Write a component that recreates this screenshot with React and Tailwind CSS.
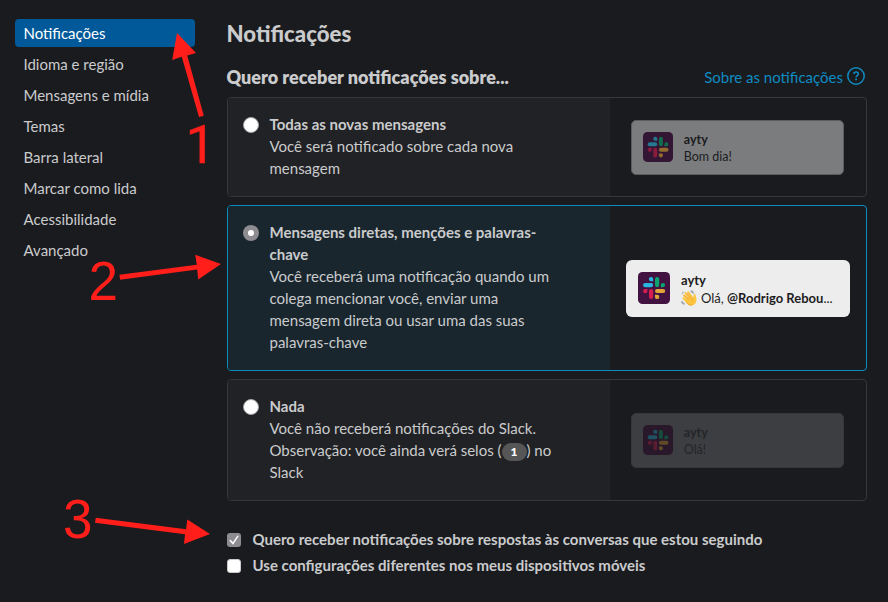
import React from 'react';

const navItems = [
  'Notificações',
  'Idioma e região',
  'Mensagens e mídia',
  'Temas',
  'Barra lateral',
  'Marcar como lida',
  'Acessibilidade',
  'Avançado',
];

function SlackLogo({ className }) {
  return (
    <svg viewBox="0 0 32 32" className={className}>
      <rect width="32" height="32" rx="4.5" fill="#421341" />
      <g fill="#2bb6df">
        <rect x="5" y="11" width="10.2" height="4.2" rx="2.1" />
        <path d="M15.2 9.3h-2.1a2.15 2.15 0 1 1 2.1-2.1z" />
      </g>
      <g fill="#0ba46e">
        <rect x="17" y="5" width="4.2" height="10.2" rx="2.1" />
        <path d="M22.8 15.2v-2.1a2.15 2.15 0 1 1 2.1 2.1z" />
      </g>
      <g fill="#e3a43a">
        <rect x="17" y="16.9" width="10.2" height="4.2" rx="2.1" />
        <path d="M17 22.8h2.1a2.15 2.15 0 1 1-2.1 2.1z" />
      </g>
      <g fill="#d41e50">
        <rect x="11" y="16.9" width="4.2" height="10.2" rx="2.1" />
        <path d="M9.4 16.9V19a2.15 2.15 0 1 1-2.1-2.1z" />
      </g>
    </svg>
  );
}

function Wave() {
  return (
    <svg viewBox="0 0 16 16" className="h-4 w-4 shrink-0">
      <path
        d="M2.4 8.2 6.2 12.4M2.9 5.4l5.2 5.6M4.6 3.1l5 6M7.2 2.3l4.6 6"
        stroke="#fcc23a"
        strokeWidth="1.9"
        strokeLinecap="round"
        fill="none"
      />
      <path
        d="M4.4 9.2 9.2 5l2.9 3c.8-.6.5-2.3.7-3.5.3-1 1.5-.9 1.7.2.3 1.7 1.2 3.7 1 5.9-.3 2.6-2.3 4.9-5.1 5-2 .1-3.6-1.2-4.7-2.7z"
        fill="#fdc540"
      />
      <path
        d="m3.9 5.3 4.1 4.4M5.9 3.3l4 4.7M12.1 8c-1.2.9-1.4 2-.9 3.2M5.6 12.5c1.2 1.9 3.1 3 5.4 2.7"
        stroke="#e8912a"
        strokeWidth=".6"
        fill="none"
        strokeLinecap="round"
      />
      <path
        d="M.6 11.2c.5 1.5 1.5 2.5 3 3M9.7 1c1.300.3 2.300 1.200 2.800 2.500"
        stroke="#a3a9ad"
        strokeWidth="1.900"
        fill="none"
      />
      <path d="M1 4.300c.3-1.300 1-2 2.100-2.400" stroke="#b9bfc3" strokeWidth="1.300" fill="none" />
    </svg>
  );
}

function Radio({ checked }) {
  return checked ? (
    <span className="mt-[3px] flex size-4 shrink-0 items-center justify-center rounded-full bg-[#8e8c91]">
      <span className="size-1.5 rounded-full bg-white" />
    </span>
  ) : (
    <span className="mt-[3px] size-4 shrink-0 rounded-full border border-[#a5a5a7] bg-white" />
  );
}

function SmallToast({ message, faint }) {
  return (
    <div
      className={`mr-[1.5px] flex h-[55px] w-[213px] items-center rounded-[5px] border pl-[11px] ${
        faint ? 'border-[#36373a] bg-[#3d3e41] text-[#242528]' : 'border-[#5b5c5f] bg-[#7b7c7e] text-[#1b1c1f]'
      }`}
    >
      <span className="mb-px shrink-0 rounded-[5px] bg-[#1a1b1f]">
        <SlackLogo className={faint ? 'size-[30px] opacity-[0.35]' : 'size-[30px] opacity-60'} />
      </span>
      <div className="ml-[11px] pt-px text-[12.5px] leading-[17px]">
        <div className="font-bold">ayty</div>
        <div>{message}</div>
      </div>
    </div>
  );
}

function Option({ title, checked, preview, children }) {
  return (
    <div
      className={`flex overflow-hidden rounded-[4px] border ${
        checked ? 'border-[#0b8bc0]' : 'border-[#36373b]'
      }`}
    >
      <div className={`flex w-[382px] shrink-0 py-4 pl-[15px] ${checked ? 'bg-[#19262e]' : 'bg-[#212225]'}`}>
        <Radio checked={checked} />
        <div className="-mt-px mb-px ml-[10.5px] w-[290px]">
          <div className="font-bold">{title}</div>
          <div>{children}</div>
        </div>
      </div>
      <div className="flex flex-1 items-center justify-center">{preview}</div>
    </div>
  );
}

function Annotations() {
  return (
    <svg
      className="pointer-events-none absolute left-0 top-0"
      width="888"
      height="602"
      fill="#ff1e1a"
      fontFamily="Liberation Sans, Arial, sans-serif"
      fontSize="55"
    >
      <path d="M177 33l19 20-8.800 2.600 16.600 60.200-4.800 1.300-17.200-60.300-9.600 3.200z" />
      <text x="185.500" y="162.500" fontFamily="Roboto, sans-serif" fontSize="54" stroke="#ff1e1a" strokeWidth=".4">
        1
      </text>
      <path d="M221 264l-22.800 15.500-1-10-77 10.200-.8-5 77.400-10-1.600-10z" />
      <text x="88.500" y="300" textLength="29.500" lengthAdjust="spacingAndGlyphs">2</text>
      <path d="M210 534l-26 10 1-9.700-90-11.500.8-5 90.300 11.400 1.200-9.700z" />
      <text x="63" y="537.500" textLength="29.500" lengthAdjust="spacingAndGlyphs">3</text>
    </svg>
  );
}

export default function App() {
  return (
    <div className="relative flex h-[602px] w-[888px] overflow-hidden bg-[#1a1b1f] pl-[15px] font-[Lato,sans-serif] text-[15px] leading-[22px] text-[#cacbcc]">
      <nav className="mt-[19px] flex w-[180px] shrink-0 flex-col gap-[3px]">
        {navItems.map((item, i) => (
          <div
            key={item}
            className={`flex h-7 items-center rounded-[4px] pl-[8.5px] ${i === 0 ? 'bg-[#015999] text-white' : ''}`}
          >
            {item}
          </div>
        ))}
      </nav>

      <main className="ml-8 w-[640px] pt-[19px]">
        <h1 className="-ml-[0.5px] text-[22.2px] font-black leading-[30px]">Notificações</h1>
        <div className="mt-[14px] flex h-[27px] items-center justify-between">
          <h2 className="-ml-[0.5px] text-[18px] font-extrabold">Quero receber notificações sobre...</h2>
          <a className="flex items-center gap-1 pr-[2px] text-[#0e8cc2]">
            <span>Sobre as notificações</span>
            <svg viewBox="0 0 18 18" className="mb-[2px] size-[18px]" fill="none" stroke="currentColor">
              <circle cx="9" cy="9" r="8.2" strokeWidth="1.5" />
              <path d="M6.900 7.100c0-1.300.9-2.100 2.200-2.100s2.200.8 2.200 2c0 1.500-2.200 1.600-2.200 3.200" strokeWidth="1.600" />
              <path d="M9.100 11.500v1.800" strokeWidth="1.800" />
            </svg>
          </a>
        </div>

        <div className="mt-[7px] flex flex-col gap-2">
          <Option title="Todas as novas mensagens" preview={<SmallToast message="Bom dia!" />}>
            Você será notificado sobre cada nova
            <br />
            mensagem
          </Option>
          <Option
            checked
            title={
              <>
                Mensagens diretas, menções e palavras-
                <br />
                chave
              </>
            }
            preview={
              <div className="flex h-[57px] w-[224px] items-center rounded-[6px] bg-[#ededed] pl-3">
                <SlackLogo className="size-8 shrink-0" />
                <div className="ml-[11px] pt-[2px] text-[13px] leading-[18px] text-[#1d1c1d]">
                  <div className="font-bold">ayty</div>
                  <div className="flex items-center whitespace-nowrap">
                    <Wave />
                    <span className="ml-1">
                      Olá, <b className="font-bold">@Rodrigo Rebou</b>...
                    </span>
                  </div>
                </div>
              </div>
            }
          >
            Você receberá uma notificação quando um
            <br />
            colega mencionar você, enviar uma
            <br />
            mensagem direta ou usar uma das suas
            <br />
            palavras-chave
          </Option>
          <Option title="Nada" preview={<SmallToast message="Olá!" faint />}>
            Você não receberá notificações do Slack.
            <br />
            <span className="flex whitespace-pre">
              Observação: você ainda verá selos (
              <span className="mt-[4px] flex h-[18px] w-[25px] items-center justify-center rounded-full bg-[#565656] text-[12px] font-black text-white">
                1
              </span>
              ) no
            </span>
            Slack
          </Option>
        </div>

        <div className="mt-[27px] flex flex-col gap-1 font-bold">
          <div className="flex items-center">
            <span className="mt-px flex size-3.5 items-center justify-center rounded-[3px] bg-[#8e8c91]">
              <svg viewBox="0 0 14 14" className="size-3.5" fill="none" stroke="#fff" strokeWidth="1.5">
                <path d="M3.3 7.6 5.9 10.6 10.7 3.4" strokeLinecap="round" strokeLinejoin="round" />
              </svg>
            </span>
            <span className="ml-[11.5px]">Quero receber notificações sobre respostas às conversas que estou seguindo</span>
          </div>
          <div className="flex items-center">
            <span className="mt-px size-3.5 rounded-[3px] border border-[#c9c9c9] bg-white" />
            <span className="ml-[11.5px]">Use configurações diferentes nos meus dispositivos móveis</span>
          </div>
        </div>
      </main>
      <Annotations />
    </div>
  );
}
